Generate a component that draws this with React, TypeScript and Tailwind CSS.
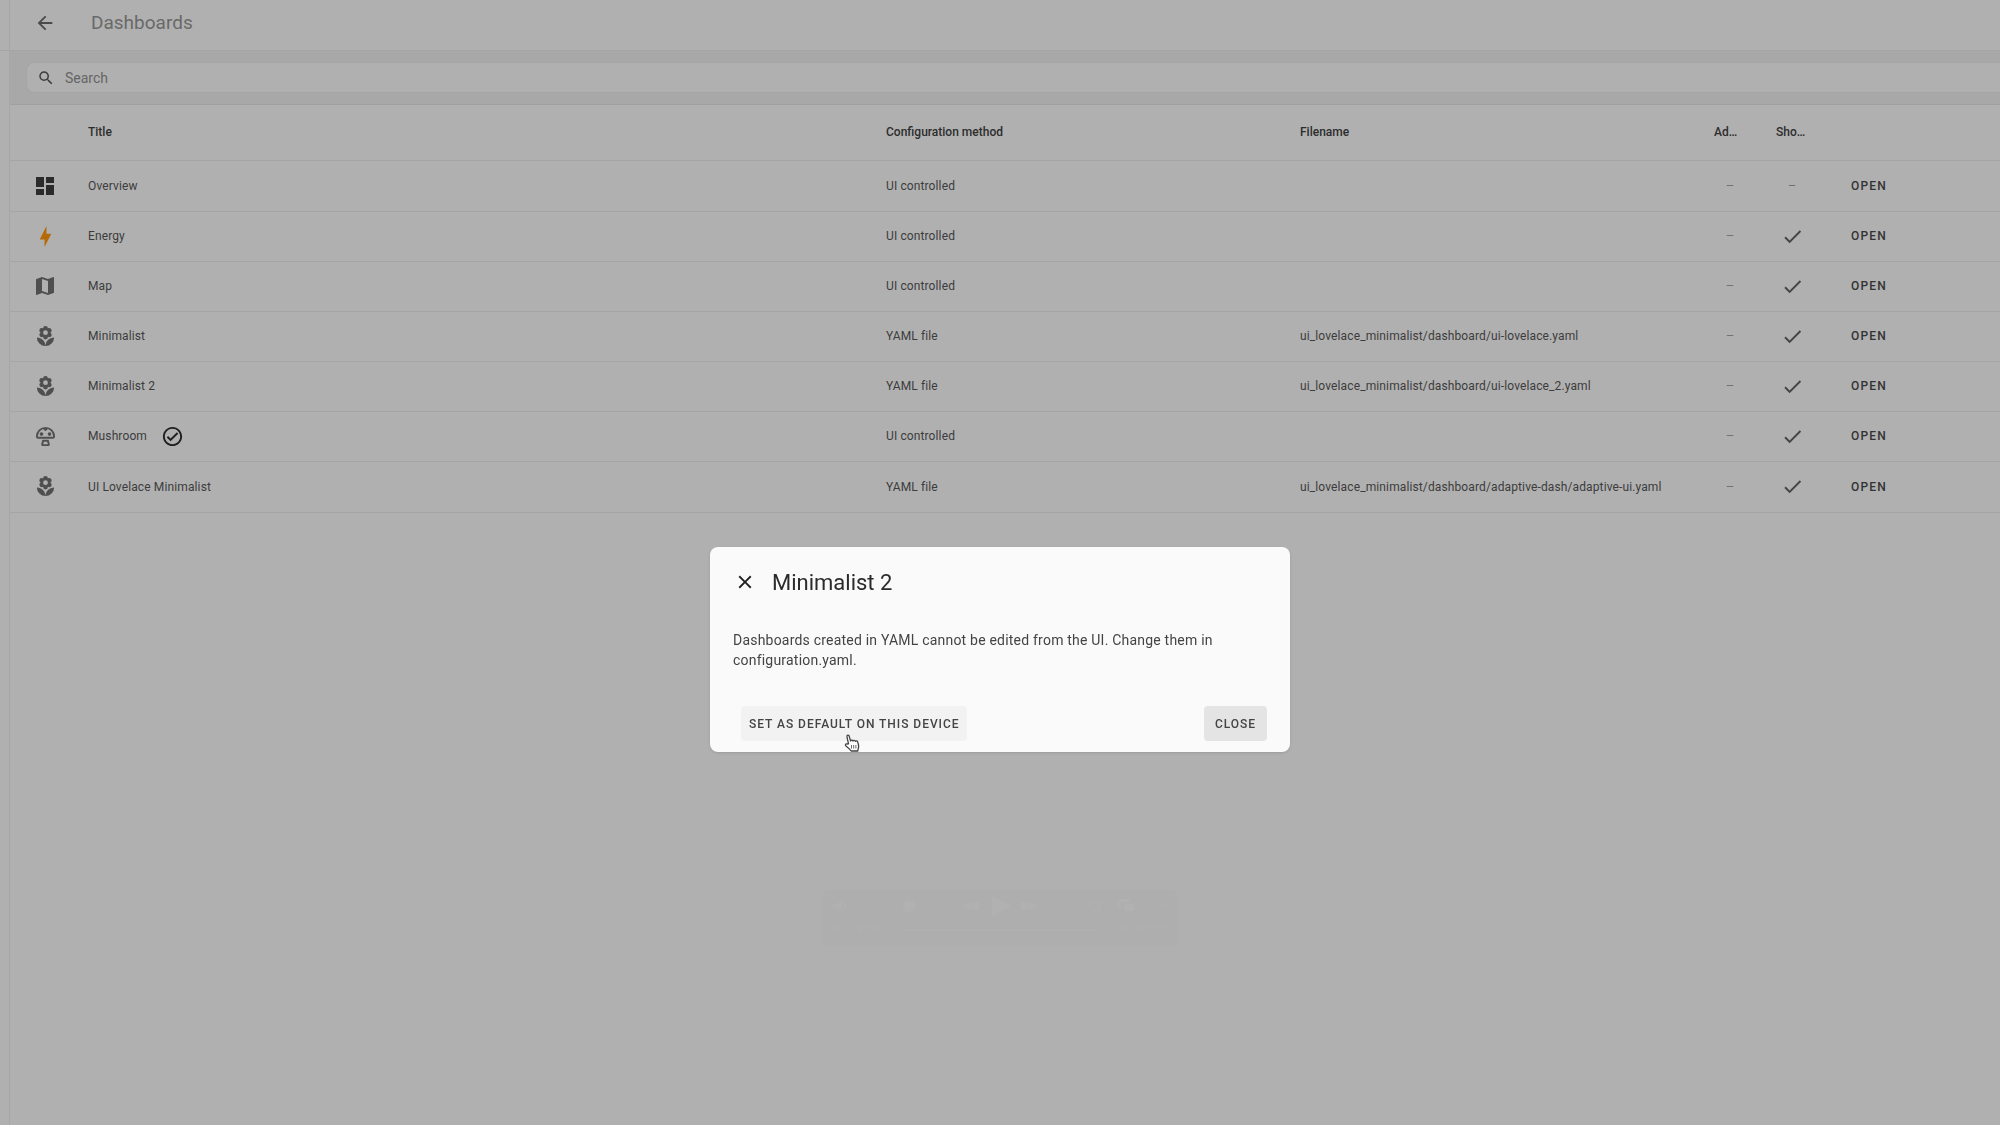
import { MdArrowBack, MdClose, MdMap, MdSearch } from "react-icons/md";

const paths = {
  dashboard: "M13,3V9H21V3M13,21H21V11H13M3,21H11V15H3M3,13H11V3H3V13Z",
  energy: "M11 15H6L13 1V9H18L11 23V15Z",
  flower:
    "M3,13A9,9 0 0,0 12,22C12,17 7.97,13 3,13M12,5.5A2.5,2.5 0 0,1 14.5,8A2.5,2.5 0 0,1 12,10.5A2.5,2.5 0 0,1 9.5,8A2.5,2.5 0 0,1 12,5.5M5.6,10.25A2.5,2.5 0 0,0 8.1,12.75C8.63,12.75 9.12,12.58 9.5,12.31C9.5,12.37 9.5,12.43 9.5,12.5A2.5,2.5 0 0,0 12,15A2.5,2.5 0 0,0 14.5,12.5C14.5,12.43 14.5,12.37 14.5,12.31C14.88,12.58 15.37,12.75 15.9,12.75C17.28,12.75 18.4,11.63 18.4,10.25C18.4,9.25 17.81,8.4 16.97,8C17.81,7.6 18.4,6.74 18.4,5.75C18.4,4.37 17.28,3.25 15.9,3.25C15.37,3.25 14.88,3.41 14.5,3.69C14.5,3.63 14.5,3.56 14.5,3.5A2.5,2.5 0 0,0 12,1A2.5,2.5 0 0,0 9.5,3.5C9.5,3.56 9.5,3.63 9.5,3.69C9.12,3.41 8.63,3.25 8.1,3.25A2.5,2.5 0 0,0 5.6,5.75C5.6,6.74 6.19,7.6 7.03,8C6.19,8.4 5.6,9.25 5.6,10.25M12,22A9,9 0 0,0 21,13C16,13 12,17 12,22Z",
  check: "M21,7L9,19L3.5,13.5L4.91,12.09L9,16.17L19.59,5.59L21,7Z",
  checkCircle:
    "M12 2C6.5 2 2 6.5 2 12S6.5 22 12 22 22 17.5 22 12 17.5 2 12 2M12 20C7.59 20 4 16.41 4 12S7.59 4 12 4 20 7.59 20 12 16.41 20 12 20M16.59 7.58L10 14.17L7.41 11.59L6 13L10 17L18 9L16.59 7.58Z",
};

const Icon = ({ path, className }: { path: string; className: string }) => (
  <svg viewBox="0 0 24 24" fill="currentColor" className={className} aria-hidden="true">
    <path d={path} />
  </svg>
);

const MushroomIcon = () => (
  <svg viewBox="0 0 24 24" fill="none" stroke="currentColor" strokeWidth="2" className="size-[23px]" aria-hidden="true">
    <path d="M3 12C3 7 7 3 12 3s9 4 9 9c0 .9-.6 1.300-1.500 1.300h-15C3.600 13.300 3 12.900 3 12Z" />
    <path d="M9.500 16.500h5l.9 3.200c.2.800-.2 1.300-1 1.300H9.600c-.8 0-1.200-.5-1-1.300Z" />
    <path d="M9.800 3.500a2.200 2.800 0 0 0 4.400 0Z" fill="currentColor" stroke="none" />
    <circle cx="7.800" cy="9.500" r="1.900" fill="currentColor" stroke="none" />
    <circle cx="16.200" cy="9.500" r="1.900" fill="currentColor" stroke="none" />
  </svg>
);

const dashboards = [
  { title: "Overview", method: "UI controlled", filename: "", sidebar: false, icon: <Icon path={paths.dashboard} className="size-6 text-[#2b2b2b]" /> },
  { title: "Energy", method: "UI controlled", filename: "", sidebar: true, icon: <Icon path={paths.energy} className="size-[23px] text-[#b56a05]" /> },
  { title: "Map", method: "UI controlled", filename: "", sidebar: true, icon: <MdMap className="size-6" /> },
  { title: "Minimalist", method: "YAML file", filename: "ui_lovelace_minimalist/dashboard/ui-lovelace.yaml", sidebar: true, icon: <Icon path={paths.flower} className="size-[23px]" /> },
  { title: "Minimalist 2", method: "YAML file", filename: "ui_lovelace_minimalist/dashboard/ui-lovelace_2.yaml", sidebar: true, icon: <Icon path={paths.flower} className="size-[23px]" /> },
  { title: "Mushroom", method: "UI controlled", filename: "", sidebar: true, isDefault: true, icon: <MushroomIcon /> },
  { title: "UI Lovelace Minimalist", method: "YAML file", filename: "ui_lovelace_minimalist/dashboard/adaptive-dash/adaptive-ui.yaml", sidebar: true, icon: <Icon path={paths.flower} className="size-[23px]" /> },
];

const DashboardTable = () => (
  <table className="w-full table-fixed border-collapse text-left text-xs tracking-[0.01em] text-[#3c3c3c]">
    <colgroup>
      <col className="w-[78px]" />
      <col />
      <col className="w-[414px]" />
      <col className="w-[414px]" />
      <col className="w-[62px]" />
      <col className="w-[62px]" />
      <col className="w-[162px]" />
    </colgroup>
    <thead>
      <tr className="h-[55px] border-b border-[#a5a5a5] tracking-normal text-[#2d2d2d]">
        <th aria-label="Icon" />
        <th className="font-medium">Title</th>
        <th className="font-medium">Configuration method</th>
        <th className="font-medium">Filename</th>
        <th className="font-medium">
          <div className="w-6 truncate">Admin only</div>
        </th>
        <th className="font-medium">
          <div className="w-8 truncate">Show in sidebar</div>
        </th>
        <th aria-label="Open" />
      </tr>
    </thead>
    <tbody>
      {dashboards.map((dashboard) => (
        <tr key={dashboard.title} className="h-[50px] border-b border-[#a5a5a5] first:h-[51px] last:h-[51px]">
          <td>
            <div className="flex w-[70px] justify-center text-[#4f4f4f]">{dashboard.icon}</div>
          </td>
          <td>
            <div className="flex items-center gap-[14px]">
              {dashboard.title}
              {dashboard.isDefault && <Icon path={paths.checkCircle} className="size-[23px] text-[#1f1f1f]" />}
            </div>
          </td>
          <td>{dashboard.method}</td>
          <td>{dashboard.filename}</td>
          <td>
            <div className="w-8 text-center text-[10px] text-[#6c6c6c]">—</div>
          </td>
          <td>
            <div className="flex w-8 justify-center text-[10px] text-[#6c6c6c]">
              {dashboard.sidebar ? <Icon path={paths.check} className="size-[23px] text-[#444]" /> : "—"}
            </div>
          </td>
          <td>
            <button className="px-[13px] font-medium tracking-widest text-[#333]">OPEN</button>
          </td>
        </tr>
      ))}
    </tbody>
  </table>
);

// Screen recorder controls, almost faded out
const RecorderBar = () => (
  <div className="fixed top-[890px] left-1/2 flex h-14 w-[356px] -translate-x-1/2 flex-col gap-1 rounded-lg bg-[#aeaeae] px-2 pt-1 text-[#b1b1b1]" aria-hidden="true">
    <svg viewBox="0 0 340 24" fill="currentColor" className="h-6 w-full">
      <path d="M3 10h4l5-4v12l-5-4H3ZM14 8c3 2 3 6 0 8M132 12l9-5v4l8-4v10l-8-4v4ZM162 2l19 10-19 11ZM191 7l8 4V7l9 5-9 5v-4l-8 4ZM288 5h12v3h-9v7h-3ZM294 10h10v7h-10Z" />
      <path d="M260 8h9v8h-9ZM328 8l4 4-4 4M333 8l4 4-4 4" fill="none" stroke="currentColor" />
      <circle cx="79" cy="12" r="6" />
    </svg>
    <div className="flex items-center gap-5 text-[10px] leading-4">
      <span>00:32:43:01</span>
      <div className="h-px flex-1 bg-[#b1b1b1]" />
      <span>00:50:01:12</span>
    </div>
  </div>
);

const HandCursor = () => (
  <svg viewBox="0 0 16 18" fill="#fff" stroke="#444" strokeWidth="1.300" strokeLinejoin="round" className="pointer-events-none absolute top-7 left-[103px] h-[18px] w-4" aria-hidden="true">
    <path d="M4.500 9.800 3 3C2.600 1 4.700.5 5.200 2.300L6.600 7c.3-1 2-1.100 2.400 0 .5-.9 2-.8 2.400.3.600-.7 2-.4 2.300.6l.9 3.600c.3 1.500-.3 2.800-.9 5.500H7.200C5.800 15 4.500 13.800 2.200 12.200c-1.500-1-.7-2.700.8-2.200Z" />
    <path d="M7.500 11v3.500M9.700 11v3.500M11.900 11v3.500" strokeWidth=".8" />
  </svg>
);

const DashboardDialog = () => (
  <div className="fixed inset-0 flex items-start justify-center pt-[547px]">
    <div role="dialog" aria-labelledby="dialog-title" className="w-[580px] rounded-lg bg-[#fafafa] px-[23px] pt-[17px] pb-[11px] shadow-sm">
      <div className="flex h-9 items-center gap-4 pl-px">
        <button aria-label="Close dialog" className="text-[#1f1f1f]">
          <MdClose className="size-[22px]" />
        </button>
        <h2 id="dialog-title" className="text-[22px] text-[#2b2b2b]">
          Minimalist 2
        </h2>
      </div>
      <p className="pt-[30px] text-sm leading-5 tracking-[0.015em] text-[#444]">
        Dashboards created in YAML cannot be edited from the UI. Change them in configuration.yaml.
      </p>
      <div className="mt-9 flex justify-between pl-2 text-xs font-medium text-[#444]">
        <div className="relative">
          <button className="h-[35px] rounded-sm bg-[#f2f2f2] px-2 tracking-[0.08em]">SET AS DEFAULT ON THIS DEVICE</button>
          <HandCursor />
        </div>
        <button className="h-[35px] rounded-sm bg-[#e4e4e4] px-[11px] tracking-[0.08em]">CLOSE</button>
      </div>
    </div>
  </div>
);

export default function App() {
  return (
    <div className="flex min-h-screen bg-[#b0b0b0] font-[Roboto,sans-serif]">
      {/* Sidebar edge */}
      <aside className="w-[10px] shrink-0 border-r border-[#a7a7a7]">
        <div className="h-[51px] border-b border-[#a5a5a5]" />
      </aside>

      <main className="min-w-0 flex-1">
        <header className="flex h-[51px] items-center gap-[35px] border-b border-[#a5a5a5] pb-1 pl-6 text-[#696969]">
          <button aria-label="Back" className="text-[#4a4a4a]">
            <MdArrowBack className="size-[22px]" />
          </button>
          <h1 className="text-[19px]">Dashboards</h1>
        </header>

        <div className="flex h-[54px] items-center border-b border-[#a0a0a0] bg-[#a8a8a8] pl-4">
          <label className="flex h-[31px] flex-1 items-center gap-[10px] rounded-l-lg border-y border-l border-[#a5a5a5] bg-[#b0b0b0] pl-[10px]">
            <MdSearch className="size-[18px] text-[#3c3c3c]" aria-hidden="true" />
            <input type="search" aria-label="Search" placeholder="Search" className="min-w-0 flex-1 bg-transparent text-sm outline-none placeholder:text-[#656565]" />
          </label>
        </div>

        <DashboardTable />
      </main>

      <RecorderBar />
      <DashboardDialog />
    </div>
  );
}
